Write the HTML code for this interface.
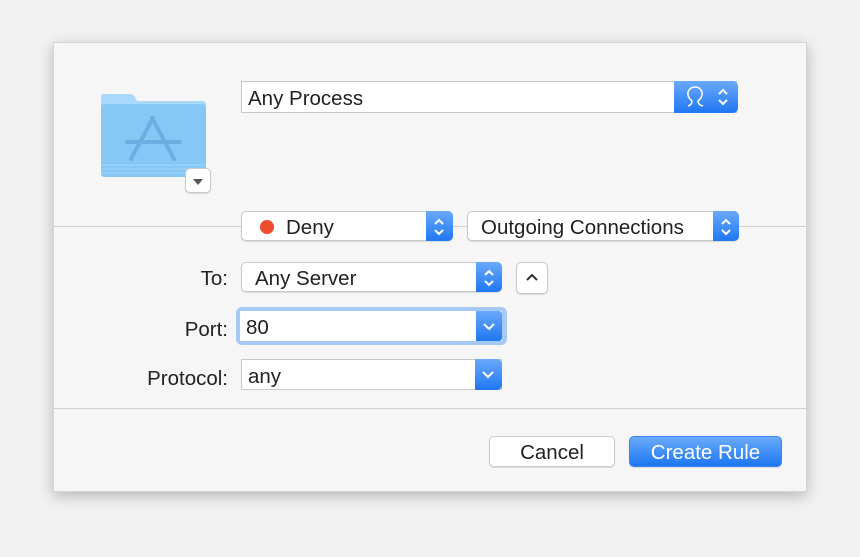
<!DOCTYPE html><html><head><style>
body{margin:0;width:860px;height:557px;background:#f2f2f2;font-family:"Liberation Sans",sans-serif;position:relative;overflow:hidden;color:#222}
.a{position:absolute;box-sizing:border-box}
.dlg{left:53px;top:42px;width:754px;height:450px;background:#f6f6f6;border:1px solid #d4d4d4;box-shadow:0 4px 14px rgba(0,0,0,.25)}
.hr{height:1px;background:#d0d0d0;left:53px;width:754px}
.fld{background:#fff;border:1px solid #c8c8c8;font-size:20.5px;line-height:33px;padding-left:6px}
.pop{background:#fff;border:1px solid #c9c9c9;border-radius:5px;box-shadow:0 1px 1px rgba(0,0,0,.12);font-size:20.5px;line-height:31px;padding-left:13px}
.blue{position:absolute;top:-1px;bottom:-1px;right:-1px;background:linear-gradient(#6aa9fb,#1f77f2);border-radius:0 5px 5px 0;line-height:0}
.btn{background:#fff;border:1px solid #c9c9c9;border-radius:5px;box-shadow:0 1px 1px rgba(0,0,0,.12);font-size:20.5px;line-height:31px;text-align:center}
.lbl{font-size:20.5px;text-align:right;width:180px;left:48px}
</style></head><body>
<div class="a dlg"></div>
<div class="a hr" style="top:226px"></div>
<div class="a hr" style="top:408px"></div>
<svg class="a" style="left:100px;top:93px" width="107" height="86" viewBox="0 0 107 86">
<path d="M1 4 Q1 1 4 1 H30 Q33 1 35 4 L37 8 H102 Q106 8 106 12 V80 Q106 84 102 84 H5 Q1 84 1 80Z" fill="#a8d9fc"/>
<path d="M1 14 Q1 11 4 11 H102 Q106 11 106 14 V80 Q106 84 102 84 H5 Q1 84 1 80Z" fill="#85c8f5"/>
<path d="M1 72 H106 M1 76 H106 M1 80 H106" stroke="#a5d4f7" stroke-width="1"/>
<g stroke="#6aaee2" stroke-linecap="round" fill="none"><path d="M27 49 H80" stroke-width="4"/><path d="M53 25 L31 66" stroke-width="4"/><path d="M52 25 L74 66" stroke-width="4"/></g>
</svg>
<div class="a btn" style="left:185px;top:168px;width:26px;height:25px"><svg width="24" height="23"><path d="M7 10 H17 L12 16Z" fill="#555"/></svg></div>
<div class="a fld" style="left:241px;top:81px;width:496px;height:32px">Any Process</div>
<div class="a" style="left:674px;top:81px;width:64px;height:32px;background:linear-gradient(#6aa9fb,#1f77f2);border-radius:0 5px 5px 0">
<svg width="64" height="32"><path d="M14 25 Q18 24 18 20 Q13 16 14 11 Q16 6 21 6 Q26 6 28 11 Q29 16 24 20 Q24 24 29 25" stroke="#fff" stroke-width="1.5" fill="none"/><path d="M45 13 L49 9 L53 13 M45 19 L49 23 L53 19" stroke="#fff" stroke-width="2" fill="none"/></svg></div>
<div class="a pop" style="left:241px;top:211px;width:212px;height:30px;padding-left:44px"><span style="position:absolute;left:18px;top:8px;width:14px;height:14px;border-radius:50%;background:#ee4c2c"></span>Deny<div class="blue" style="width:27px"><svg width="27" height="32"><path d="M9 13 L13 9 L17 13 M9 19 L13 23 L17 19" stroke="#fff" stroke-width="2" fill="none"/></svg></div></div>
<div class="a pop" style="left:467px;top:211px;width:272px;height:30px">Outgoing Connections<div class="blue" style="width:26px"><svg width="26" height="32"><path d="M9 13 L13 9 L17 13 M9 19 L13 23 L17 19" stroke="#fff" stroke-width="2" fill="none"/></svg></div></div>
<div class="a lbl" style="top:267px">To:</div>
<div class="a pop" style="left:241px;top:262px;width:261px;height:30px">Any Server<div class="blue" style="width:26px"><svg width="26" height="32"><path d="M9 13 L13 9 L17 13 M9 19 L13 23 L17 19" stroke="#fff" stroke-width="2" fill="none"/></svg></div></div>
<div class="a btn" style="left:516px;top:262px;width:32px;height:32px"><svg width="30" height="30"><path d="M10 17 L15 12 L20 17" stroke="#333" stroke-width="2" fill="none"/></svg></div>
<div class="a lbl" style="top:318px">Port:</div>
<div class="a" style="left:236px;top:307px;width:271px;height:38px;border-radius:6px;background:#a6c8f5"></div>
<div class="a fld" style="left:240px;top:311px;width:262px;height:30px;border:none;line-height:34px">80<div class="blue" style="width:26px;top:0;bottom:0;right:0;border-radius:0 3px 3px 0"><svg width="26" height="30"><path d="M8 13 L13 18 L18 13" stroke="#fff" stroke-width="2" fill="none"/></svg></div></div>
<div class="a lbl" style="top:367px">Protocol:</div>
<div class="a fld" style="left:241px;top:359px;width:261px;height:31px">any<div class="blue" style="width:27px;border-radius:0 5px 5px 0"><svg width="27" height="31"><path d="M8 13 L13 18 L18 13" stroke="#fff" stroke-width="2" fill="none"/></svg></div></div>
<div class="a btn" style="left:489px;top:436px;width:126px;height:31px">Cancel</div>
<div class="a btn" style="left:629px;top:436px;width:153px;height:31px;background:linear-gradient(#6aabfb,#1c76f2);border-color:#3a86f0;color:#fff">Create Rule</div>
</body></html>
